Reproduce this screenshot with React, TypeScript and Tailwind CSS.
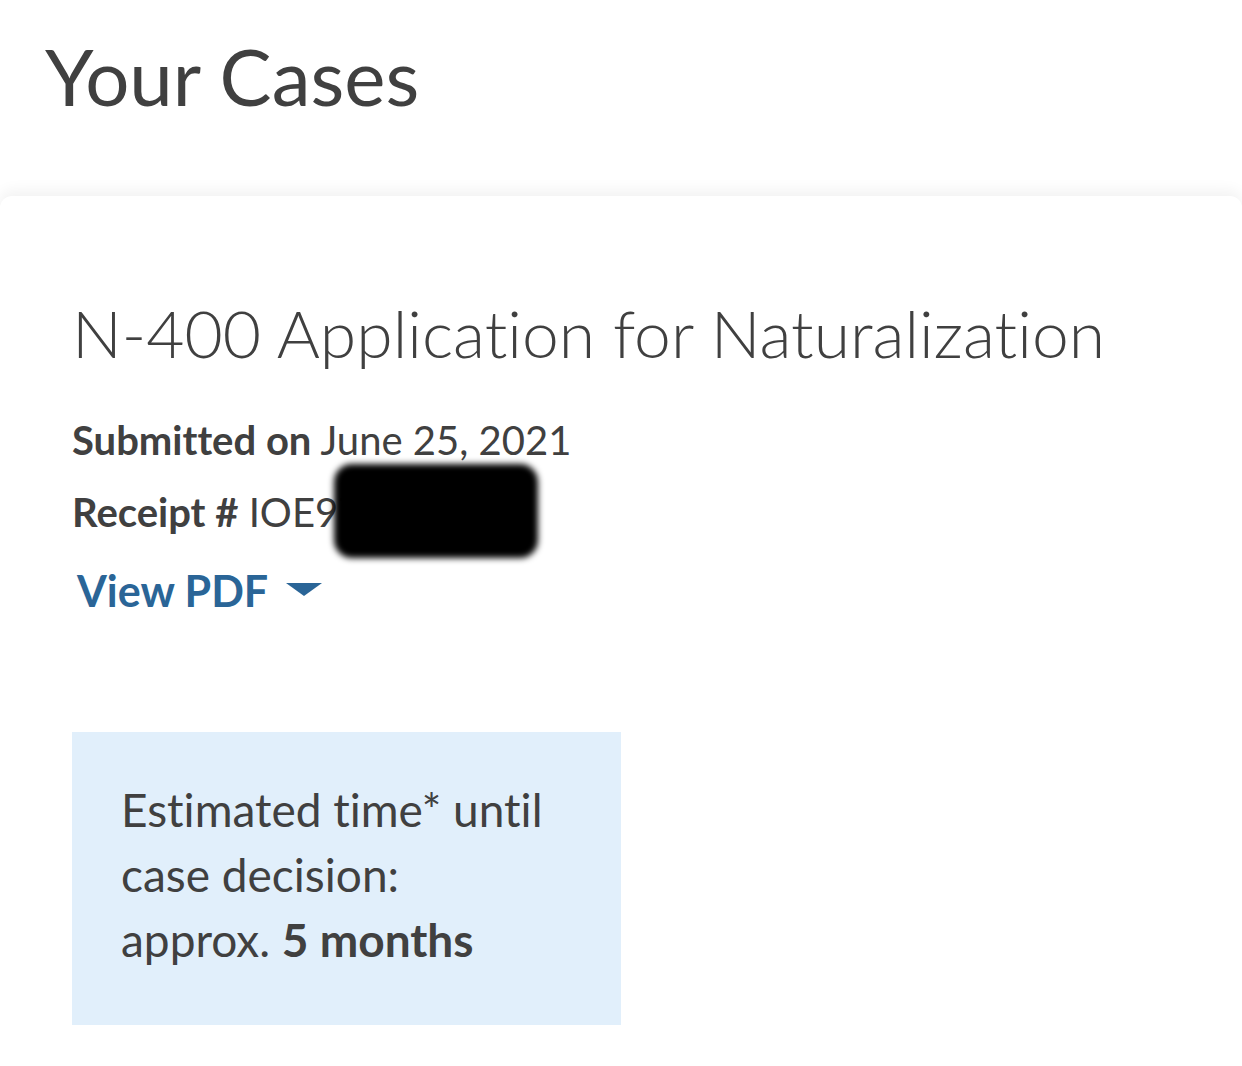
export default function App() {
  return (
    <div
      className="min-h-[1066px] overflow-hidden bg-white text-[#404040] [font-variant-ligatures:none]"
      style={{ fontFamily: 'Lato, "Open Sans", "Liberation Sans", sans-serif' }}
    >
      <h1 className="pl-[45px] pt-[28px] text-[78px] leading-[96px] font-normal">Your Cases</h1>

      <div className="mt-[72px] rounded-t-[12px] bg-white shadow-[0_-6px_14px_rgba(0,0,0,0.05)] pl-[72px] pt-[97px] pb-[80px]">
        <h2 className="text-[66px] leading-[80px] font-light">N-400 Application for Naturalization</h2>

        <div className="mt-[31px] text-[40px] leading-[72px]">
          <p>
            <span className="font-bold">Submitted on</span> June 25, 2021
          </p>
          <p className="relative">
            <span className="font-bold">Receipt #</span> IOE97
            <span className="absolute left-[262px] top-[-12px] h-[94px] w-[204px] rounded-[18px] bg-black blur-[3px]" />
          </p>
          <button className="mt-[7px] flex items-center gap-[17px] pl-[5px] text-[43px] leading-[72px] font-bold text-[#2a6597]">
            View PDF
            <svg width="38" height="15" viewBox="0 0 38 15" className="mt-[-4px]">
              <path d="M1 1h36L19 14z" fill="#2a6597" />
            </svg>
          </button>
        </div>

        <div className="mt-[105px] w-[549px] bg-[#e1effb] pl-[49px] pr-[10px] pt-[45px] pb-[53px] text-[46px] leading-[65px]">
          <p>
            Estimated time* until
            <br />
            case decision:
            <br />
            approx. <span className="font-bold">5 months</span>
          </p>
        </div>
      </div>
    </div>
  );
}
